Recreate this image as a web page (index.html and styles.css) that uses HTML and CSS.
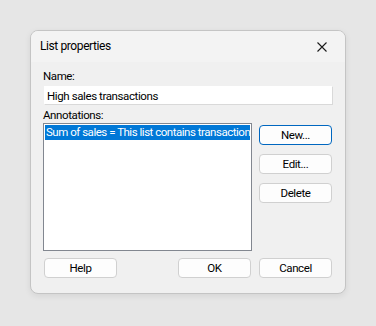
FILE: index.html
```html
<!DOCTYPE html>
<html lang="en">
<head>
    <meta charset="UTF-8">
    <meta name="viewport" content="width=device-width, initial-scale=1.0">
    <title>List properties</title>
    <link rel="stylesheet" href="styles.css">
</head>
<body>
    <div class="dialog">
        <div class="titlebar">
            <span class="title">List properties</span>
            <button class="close" aria-label="Close">
                <svg width="10" height="10" viewBox="0 0 10 10">
                    <path d="M0.5 0.5 L9.5 9.5 M9.5 0.5 L0.5 9.5" stroke="#1a1a1a" stroke-width="1.1" fill="none"/>
                </svg>
            </button>
        </div>
        <div class="content">
            <label class="field-label" for="name">Name:</label>
            <input type="text" id="name" class="text-input" value="High sales transactions">

            <label class="field-label annotations-label">Annotations:</label>
            <div class="annotations">
                <div class="listbox">
                    <div class="list-item selected">Sum of sales = This list contains transaction</div>
                </div>
                <div class="side-buttons">
                    <button class="btn default">New...</button>
                    <button class="btn">Edit...</button>
                    <button class="btn">Delete</button>
                </div>
            </div>

            <div class="footer">
                <button class="btn">Help</button>
                <div class="footer-right">
                    <button class="btn">OK</button>
                    <button class="btn">Cancel</button>
                </div>
            </div>
        </div>
    </div>
</body>
</html>
```

FILE: styles.css
```css
body {
    margin: 0;
    padding: 30px 30px;
    background-color: #e6e6e6;
    font-family: Roboto, "Noto Sans", sans-serif;
    font-size: 11.5px;
    letter-spacing: -0.4px;
    color: #000;
}
.dialog {
    width: 314px;
    height: 262px;
    background: #f0f0f0;
    border: 1px solid #c4c4c4;
    border-radius: 8px;
    box-shadow: 0 2px 6px rgba(0,0,0,0.08);
    overflow: hidden;
}
.titlebar {
    height: 31px;
    background: #f3f3f3;
    display: flex;
    align-items: center;
    justify-content: space-between;
    padding-left: 9px;
}
.title {
    font-size: 12px;
    margin-top: -2px;
}
.close {
    width: 46px;
    height: 31px;
    border: none;
    background: transparent;
    padding: 0;
    display: flex;
    align-items: center;
    justify-content: center;
}
.content {
    padding: 7px 13px 0 12px;
}
.field-label {
    display: block;
    line-height: 15px;
}
.text-input {
    display: block;
    box-sizing: border-box;
    width: 289px;
    height: 19px;
    margin: 2px 0 0 1px;
    padding: 0 2px;
    border: 1px solid #fff;
    border-right-color: #d9d9d9;
    border-bottom-color: #d9d9d9;
    background: #fff;
    font: inherit;
    letter-spacing: inherit;
    color: #000;
    outline: none;
}
.annotations-label {
    margin-top: 3px;
}
.annotations {
    display: flex;
    gap: 7px;
}
.listbox {
    box-sizing: border-box;
    width: 211px;
    height: 128px;
    background: #fff;
    border: 1px solid #828790;
    padding: 1px;
    overflow: hidden;
}
.list-item {
    white-space: nowrap;
    overflow: hidden;
    line-height: 15px;
    padding-left: 1px;
    letter-spacing: -0.48px;
}
.selected {
    background: #0078d7;
    color: #fff;
}
.side-buttons {
    display: flex;
    flex-direction: column;
    gap: 9px;
    padding-top: 2px;
}
.btn {
    box-sizing: border-box;
    width: 73px;
    height: 20px;
    background: #fdfdfd;
    border: 1px solid #d0d0d0;
    border-radius: 4px;
    font: inherit;
    letter-spacing: inherit;
    color: #000;
    padding: 0;
}
.btn.default {
    border-color: #0067c0;
}
.footer {
    display: flex;
    justify-content: space-between;
    margin-top: 7px;
    padding-left: 1px;
}
.footer-right {
    display: flex;
    gap: 8px;
}
```
